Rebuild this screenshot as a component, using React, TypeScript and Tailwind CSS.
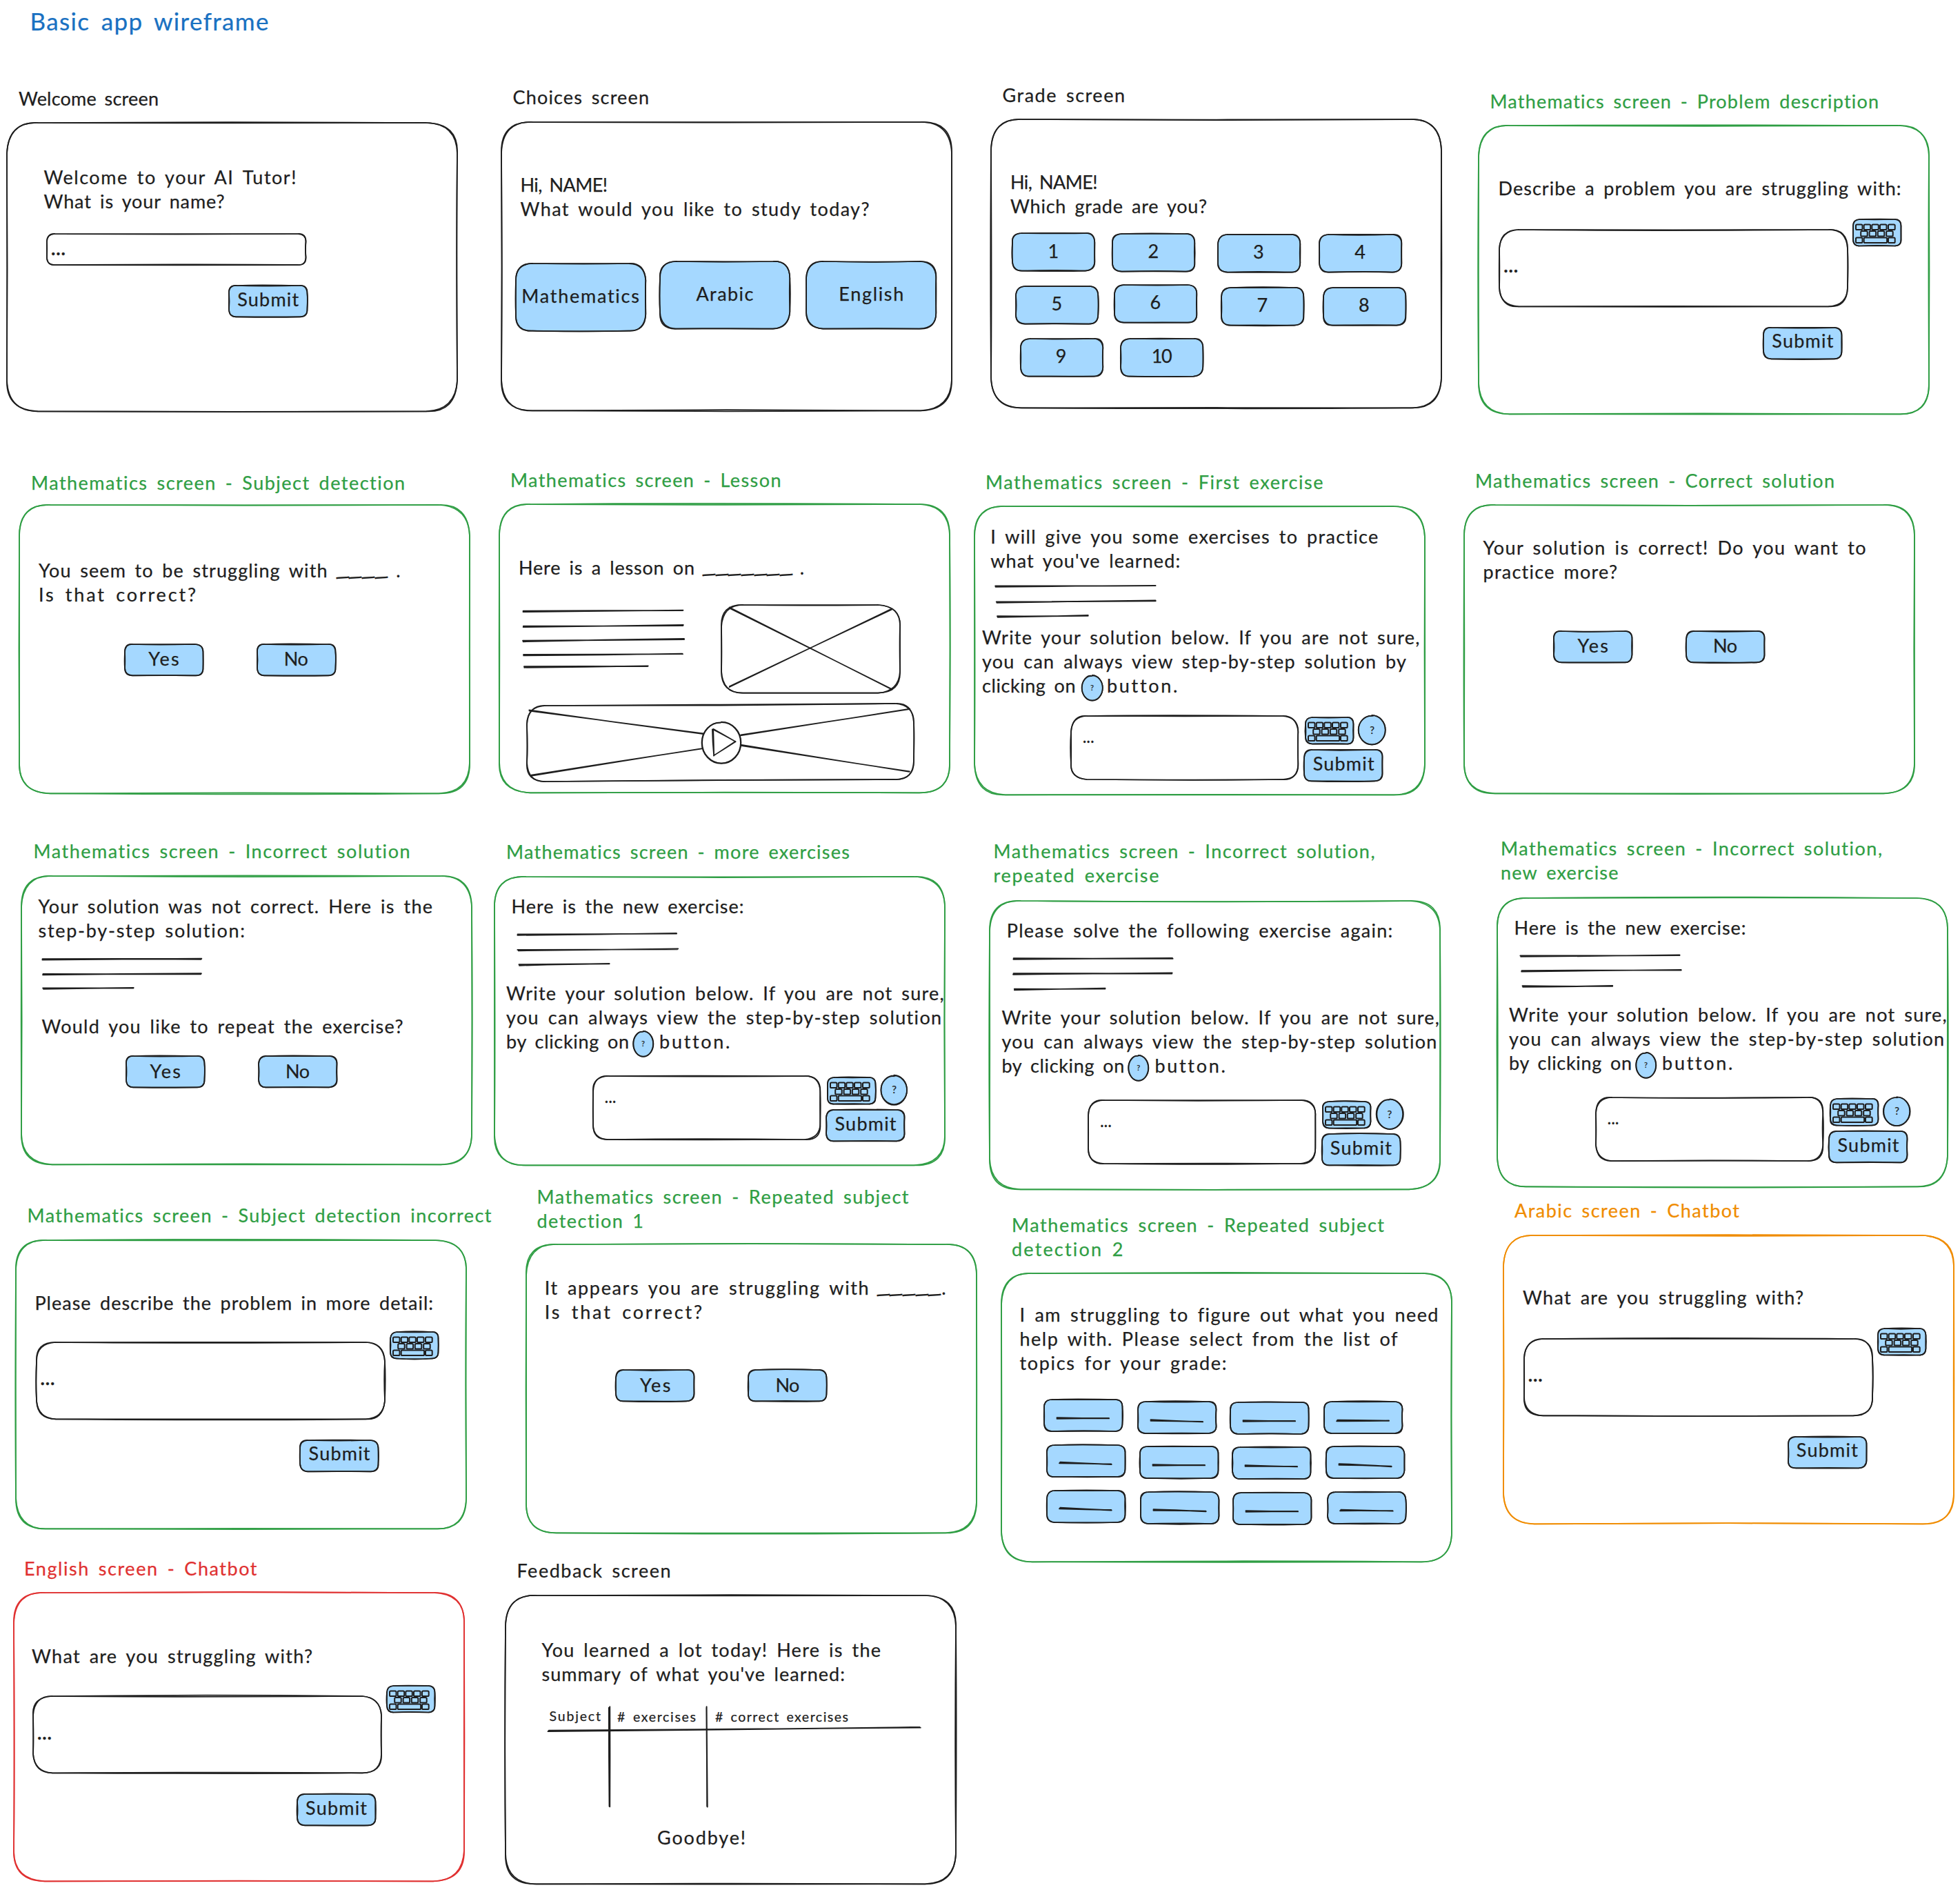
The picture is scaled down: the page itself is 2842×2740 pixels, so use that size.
import React, { useLayoutEffect, useRef } from "react";

const INK = "#1e1e1e";
const GREEN = "#2f9e44";
const FILL = "#a5d8ff";

type Pt = [number, number];

function makeRandom(seed: number) {
  let s = (Math.floor(seed * 97) % 2147483646) + 1;
  for (let i = 0; i < 4; i++) s = (s * 16807) % 2147483647;
  return () => {
    s = (s * 16807) % 2147483647;
    return (s / 2147483647) * 2 - 1;
  };
}

const f = (n: number) => n.toFixed(2);

/** One pen stroke between two points, bowed a little to the side. */
function stroke(a: Pt, b: Pt, rnd: () => number, amp: number) {
  const len = Math.hypot(b[0] - a[0], b[1] - a[1]) || 1;
  const nx = -(b[1] - a[1]) / len;
  const ny = (b[0] - a[0]) / len;
  const k1 = rnd() * amp;
  const k2 = k1 * 0.7 + rnd() * amp * 0.3;
  const c1: Pt = [a[0] + (b[0] - a[0]) * 0.35 + nx * k1, a[1] + (b[1] - a[1]) * 0.35 + ny * k1];
  const c2: Pt = [a[0] + (b[0] - a[0]) * 0.65 + nx * k2, a[1] + (b[1] - a[1]) * 0.65 + ny * k2];
  return `C${f(c1[0])} ${f(c1[1])} ${f(c2[0])} ${f(c2[1])} ${f(b[0])} ${f(b[1])}`;
}

function roundedPath(w: number, h: number, rnd: () => number, tilt = 0) {
  const r = Math.min(Math.min(w, h) * 0.25, 45);
  const amp = Math.min(2, 1.3 + Math.max(w, h) / 800);
  const j = () => rnd() * Math.min(2.4, r * 0.09);
  const t = -tilt;
  return [
    `M${f(r)} 0`,
    stroke([r, 0], [w - r, t], rnd, amp),
    `Q${f(w + j())} ${f(t + j())} ${f(w)} ${f(r + t)}`,
    stroke([w, r + t], [w, h - r + t], rnd, amp * 0.7),
    `Q${f(w + j())} ${f(h + t + j())} ${f(w - r)} ${f(h + t)}`,
    stroke([w - r, h + t], [r, h], rnd, amp),
    `Q${f(j())} ${f(h + j())} 0 ${f(h - r)}`,
    stroke([0, h - r], [0, r], rnd, amp * 0.7),
    `Q${f(j())} ${f(j())} ${f(r)} 0`,
  ].join("");
}

type BoxProps = {
  w: number;
  h: number;
  seed?: number;
  color?: string;
  fill?: string;
  tilt?: number;
  className?: string;
  children?: React.ReactNode;
};

function SketchBox({ w, h, seed = 1, color = INK, fill = "none", tilt = 0, className = "", children }: BoxProps) {
  const rnd = makeRandom(seed * 31 + w * 7 + h);
  const a = roundedPath(w, h, rnd, tilt);
  const b = roundedPath(w, h, rnd, tilt);
  return (
    <div className={`relative isolate flex shrink-0 ${className}`} style={{ width: w, height: h }}>
      <svg className="absolute inset-0 -z-10 h-full w-full overflow-visible" fill="none" stroke={color} strokeWidth={1.75} strokeLinecap="round">
        <path d={a} fill={fill} />
        <path d={b} />
      </svg>
      {children}
    </div>
  );
}

function SketchEllipse({ w, h, seed = 1, fill = FILL, className = "", children }: BoxProps) {
  const rnd = makeRandom(seed * 13 + w);
  const pass = () => {
    const rx = w / 2 + rnd() * 0.5;
    const ry = h / 2 + rnd() * 0.6;
    const cx = w / 2;
    const cy = h / 2;
    const k = 0.552;
    return `M${f(cx)} ${f(cy - ry)}C${f(cx + rx * k)} ${f(cy - ry)} ${f(cx + rx)} ${f(cy - ry * k)} ${f(cx + rx)} ${f(cy)}C${f(cx + rx)} ${f(cy + ry * k)} ${f(cx + rx * k)} ${f(cy + ry)} ${f(cx)} ${f(cy + ry)}C${f(cx - rx * k)} ${f(cy + ry)} ${f(cx - rx)} ${f(cy + ry * k)} ${f(cx - rx)} ${f(cy)}C${f(cx - rx)} ${f(cy - ry * k)} ${f(cx - rx * k)} ${f(cy - ry)} ${f(cx + rnd() * 2)} ${f(cy - ry + 0.8)}`;
  };
  return (
    <div className={`relative isolate flex shrink-0 items-center justify-center ${className}`} style={{ width: w, height: h }}>
      <svg className="absolute inset-0 -z-10 h-full w-full overflow-visible" fill="none" stroke={INK} strokeWidth={1.7} strokeLinecap="round">
        <path d={pass()} fill={fill} />
        <path d={pass()} />
      </svg>
      {children}
    </div>
  );
}

/** Loose pen lines; each entry is x1, y1, x2, y2 inside the drawing. */
function Pen({ lines, spread = 0.7, width = 1.9, className = "" }: { lines: number[][]; spread?: number; width?: number; className?: string }) {
  return (
    <svg className={`overflow-visible ${className}`} fill="none" stroke={INK} strokeWidth={width} strokeLinecap="round">
      {lines.map(([x1, y1, x2, y2], i) => {
        const rnd = makeRandom(x1 + y1 * 3 + x2 + 11);
        const pass = (s: number) => {
          const a: Pt = [x1 + rnd() * 0.8, y1 + s * spread];
          const b: Pt = [x2 + rnd() * 0.8, y2 - s * spread * (0.4 + rnd() * 0.6)];
          return `M${f(a[0])} ${f(a[1])}${stroke(a, b, rnd, 0.6)}`;
        };
        return <path key={i} d={pass(1) + pass(-1)} />;
      })}
    </svg>
  );
}

/** A line of text tracked out to a given width. */
function Line({ w, text, className = "text-[27px] leading-[35px]" }: { w: number; text: string; className?: string }) {
  const ref = useRef<HTMLSpanElement>(null);
  useLayoutEffect(() => {
    const el = ref.current;
    if (!el) return;
    el.style.letterSpacing = "0px";
    const natural = el.getBoundingClientRect().width;
    el.style.letterSpacing = `${(w + 2 - natural) / Math.max(1, text.length - 1)}px`;
  }, [w, text]);
  return (
    <p className={`shrink-0 whitespace-pre ${className}`} style={{ width: w }}>
      <span ref={ref} className="-ml-px inline-block [word-spacing:0.17em]">
        {text}
      </span>
    </p>
  );
}

function Lines({ rows }: { rows: [string, number][] }) {
  return (
    <div className="flex flex-col">
      {rows.map(([text, w]) => (
        <Line key={text} text={text} w={w} />
      ))}
    </div>
  );
}

function Blank({ n, className = "" }: { n: number; className?: string }) {
  return (
    <p className={`flex shrink-0 -translate-y-[5px] font-['Liberation_Sans',sans-serif] text-[32px] leading-[35px] ${className}`}>
      {Array.from({ length: n }, (_, i) => (
        <span key={i} className="inline-block w-[18.7px] -rotate-4">
          _
        </span>
      ))}
    </p>
  );
}

type ScreenProps = {
  place: string;
  title: [string, number][];
  titleClass: string;
  color?: string;
  seed: number;
  className: string;
  children: React.ReactNode;
};

/** One wireframe pinned on the canvas: its caption and its outlined panel. */
function Screen({ place, title, titleClass, color = INK, seed, className, children }: ScreenProps) {
  return (
    <section className={`absolute flex w-[653px] flex-col ${place}`}>
      <header className={titleClass}>
        <Lines rows={title} />
      </header>
      <SketchBox w={653} h={418.3} seed={seed} color={color} className={`flex-col ${className}`}>
        {children}
      </SketchBox>
    </section>
  );
}

function Button({ w = 113.5, h = 45.3, label, tw, seed = 1, className = "pb-[4px]" }: { w?: number; h?: number; label: string; tw: number; seed?: number; className?: string }) {
  return (
    <SketchBox w={w} h={h} seed={seed} fill={FILL} className={`items-center justify-center ${className}`}>
      <Line w={tw} text={label} />
    </SketchBox>
  );
}

const Submit = ({ seed = 5, className = "" }: { seed?: number; className?: string }) => (
  <Button label="Submit" tw={87} seed={seed} className={`pb-[7px] ${className}`} />
);

const YesNo = ({ seed, className }: { seed: number; className: string }) => (
  <div className={`flex gap-[78.3px] ${className}`}>
    <Button label="Yes" tw={42.5} seed={seed} />
    <Button label="No" tw={33} seed={seed + 4} />
  </div>
);

const KEYS = [
  [4, 7.5, 9.5], [15.7, 7.5, 9.5], [27.3, 7.5, 9.5], [39, 7.5, 9.5], [51, 7.5, 9.7],
  [11.2, 17, 9.5], [23.6, 17, 9.5], [35.8, 17, 9.5], [48.2, 17, 9.5],
  [4, 26.4, 9.5], [15.7, 26.4, 33.4], [51, 26.4, 9.7],
];

function Keyboard({ seed = 2 }: { seed?: number }) {
  return (
    <SketchBox w={69.5} h={38.5} seed={seed} fill={FILL}>
      <svg className="h-full w-full" viewBox="0 0 69.5 38.5" fill={FILL} stroke={INK} strokeWidth={2}>
        {KEYS.map(([x, y, w], i) => (
          <rect key={i} x={x} y={y} width={w} height={7.6} rx={1.6} />
        ))}
      </svg>
    </SketchBox>
  );
}

function Prompt({ seed, className }: { seed: number; className: string }) {
  return (
    <div className={`flex flex-col ${className}`}>
      <div className="flex gap-2">
        <SketchBox w={505} h={111.3} seed={seed} className="mt-[15px] items-center pb-[7px] pl-[7px]">
          <Line w={19} text="..." className="text-[27px] leading-[35px] font-bold" />
        </SketchBox>
        <Keyboard seed={seed} />
      </div>
      <Submit seed={seed} className="mt-[30.7px] ml-[382.8px]" />
    </div>
  );
}

function Answer({ seed, className }: { seed: number; className: string }) {
  return (
    <div className={`flex gap-[9.4px] ${className}`}>
      <SketchBox w={329.3} h={92} seed={seed} className="mt-[1.5px] items-start pt-[18px] pl-[18.5px]">
        <Line w={14} text="..." className="text-[20px] leading-[26px] font-bold" />
      </SketchBox>
      <div className="flex flex-col">
        <div className="ml-[1.9px] flex h-[50.5px] items-start gap-[7.7px]">
          <div className="pt-[3.5px]">
            <Keyboard seed={seed} />
          </div>
          <SketchEllipse w={38.5} h={42.5} seed={seed}>
            <span className="text-[15px] leading-none">?</span>
          </SketchEllipse>
        </div>
        <Submit seed={seed} />
      </div>
    </div>
  );
}

type InstructionsProps = {
  second: [string, number];
  third: [string, number];
  before: string;
  after: string;
  className: string;
};

function Instructions({ second, third, before, after, className }: InstructionsProps) {
  return (
    <div className={`flex flex-col ${className}`}>
      <Lines rows={[["Write your solution below. If you are not sure,", 633], second]} />
      <div className="flex h-[35px] items-start">
        <Line text={third[0]} w={third[1]} />
        <SketchEllipse w={29.5} h={36.7} seed={third[1]} className={`mt-[2.5px] ${before}`}>
          <span className="pb-0.5 text-[11px] leading-none">?</span>
        </SketchEllipse>
        <div className={after}>
          <Line text="button." w={99.5} />
        </div>
      </div>
    </div>
  );
}

const SCRIBBLE = "h-12 w-60 shrink-0";

type ExerciseProps = { place: string; title: [string, number][]; titleClass: string; seed: number; intro: [string, number]; lines: number[][] };

function ExerciseScreen({ place, title, titleClass, seed, intro, lines }: ExerciseProps) {
  return (
    <Screen place={place} title={title} titleClass={titleClass} color={GREEN} seed={seed} className="pt-[25px]">
      <div className="pl-[25.5px] text-[#1e1e1e]">
        <Line text={intro[0]} w={intro[1]} />
      </div>
      <Pen className={`mt-[22.2px] ml-[33.7px] ${SCRIBBLE}`} lines={lines} />
      <Instructions
        className="mt-[21.1px] ml-[18.1px]"
        second={["you can always view the step-by-step solution", 629.5]}
        third={["by clicking on", 176]}
        before="ml-[6.7px]"
        after="ml-[9.8px]"
      />
      <Answer seed={seed} className="mt-[31.5px] ml-[142.6px]" />
    </Screen>
  );
}

const digit = (n: string, seed: number, className: string) => (
  <div key={n} className={className}>
    <Button w={119.3} h={54.6} label={n} tw={n.length > 1 ? 28 : 15} seed={seed} className="pb-[5px]" />
  </div>
);

const topic = (seed: number, className: string, a: number, b: number) => (
  <div className={className}>
    <SketchBox w={113.5} h={46} seed={seed} fill={FILL}>
      <Pen className="h-full w-full" spread={0.7} lines={[[18.5, a, 94, b]]} />
    </SketchBox>
  </div>
);

const captionGreen = "text-[#2f9e44]";

export default function App() {
  return (
    <main className="relative h-[2740px] w-[2842px] overflow-hidden bg-white font-[Lato,sans-serif] text-[#1e1e1e] [-webkit-text-stroke:0.25px]">
      <h1 className="pt-[7px] pl-[44.5px] text-[#1971c2]">
        <Line w={344} text="Basic app wireframe" className="text-[35px] leading-[46px]" />
      </h1>

      <Screen place="left-[10px] top-[125px]" title={[["Welcome screen", 201]]} titleClass="ml-[18px] mb-[18px]" seed={1} className="pt-[60.7px]">
        <div className="pl-[54.5px]">
          <Lines rows={[["Welcome to your AI Tutor!", 364], ["What is your name?", 260]]} />
        </div>
        <SketchBox w={375.5} h={45} seed={3} className="mt-[30.3px] ml-[58px] items-center pb-[4px] pl-[7px]">
          <Line w={19} text="..." className="text-[27px] leading-[35px] font-bold" />
        </SketchBox>
        <Submit seed={6} className="mt-[30px] ml-[322px]" />
      </Screen>

      <Screen place="left-[727px] top-[123px]" title={[["Choices screen", 195.5]]} titleClass="ml-[17.5px] mb-[18.7px]" seed={2} className="pt-[73px]">
        <div className="pl-[28.5px]">
          <Lines rows={[["Hi, NAME!", 124.5], ["What would you like to study today?", 504]]} />
        </div>
        <div className="mt-[59px] ml-[20.7px] flex items-start">
          <div className="mt-[3px]">
            <Button w={188.3} h={97.7} label="Mathematics" tw={169} seed={3} className="pb-[4px]" />
          </div>
          <div className="ml-[20.8px]">
            <Button w={188.3} h={97.7} label="Arabic" tw={81} seed={8} className="pb-[5px]" />
          </div>
          <div className="mt-[0.4px] ml-[24.1px]">
            <Button w={188.3} h={97.7} label="English" tw={92} seed={11} className="pb-[5px]" />
          </div>
        </div>
      </Screen>

      <Screen place="left-[1437.2px] top-[120px]" title={[["Grade screen", 175.5]]} titleClass="ml-[17.3px] mb-[18.3px]" seed={3} className="pt-[73.2px]">
        <div className="pl-[28.8px]">
          <Lines rows={[["Hi, NAME!", 124.5], ["Which grade are you?", 283]]} />
        </div>
        <div className="mt-[21.9px] ml-[31.2px] flex h-[55.9px] items-start">
          {digit("1", 1, "")}
          {digit("2", 2, "ml-[25.6px] mt-[0.6px]")}
          {digit("3", 3, "ml-[33.4px] mt-[1.3px]")}
          {digit("4", 4, "ml-[27.9px] mt-[1.3px]")}
        </div>
        <div className="mt-[18.3px] ml-[36.2px] flex h-[58.6px] items-start">
          {digit("5", 5, "mt-[2.4px]")}
          {digit("6", 6, "ml-[23.8px]")}
          {digit("7", 7, "ml-[35.6px] mt-1")}
          {digit("8", 8, "ml-[28.3px] mt-1")}
        </div>
        <div className="mt-5 ml-[42.5px] flex gap-[26px]">
          {digit("9", 9, "")}
          {digit("10", 10, "")}
        </div>
      </Screen>

      <Screen
        place="left-[2144px] top-[129.3px]"
        title={[["Mathematics screen - Problem description", 562.5]]}
        titleClass={`ml-[17.5px] mb-[18.1px] ${captionGreen}`}
        color={GREEN}
        seed={4}
        className="pt-[73px]"
      >
        <div className="pl-[29.5px]">
          <Line w={582} text="Describe a problem you are struggling with:" />
        </div>
        <Prompt seed={4} className="mt-[27.3px] ml-[30.3px]" />
      </Screen>

      <Screen
        place="left-[28px] top-[681.5px]"
        title={[["Mathematics screen - Subject detection", 541]]}
        titleClass={`ml-[18px] mb-[15.3px] ${captionGreen}`}
        color={GREEN}
        seed={5}
        className="pt-[77.2px]"
      >
        <div className="flex flex-col pl-[29px]">
          <div className="flex h-[35px]">
            <Line w={416.5} text="You seem to be struggling with" />
            <Blank n={4} className="ml-[13px]" />
            <div className="ml-[14px]">
              <Line w={4} text="." />
            </div>
          </div>
          <Line w={226} text="Is that correct?" />
        </div>
        <YesNo seed={2} className="mt-[55.2px] ml-[152.8px]" />
      </Screen>

      <Screen
        place="left-[723.7px] top-[678px]"
        title={[["Mathematics screen - Lesson", 391]]}
        titleClass={`ml-[17.3px] mb-[17.8px] ${captionGreen}`}
        color={GREEN}
        seed={6}
        className="pt-[74.6px]"
      >
        <div className="flex h-[35px] pl-[29.3px]">
          <Line w={253} text="Here is a lesson on" />
          <Blank n={7} className="ml-[12px]" />
          <div className="ml-[12px]">
            <Line w={4} text="." />
          </div>
        </div>
        <div className="mt-[36.3px] ml-[34.3px] flex items-start gap-[48.4px]">
          <Pen
            className="mt-[7.1px] h-[86px] w-60 shrink-0"
            lines={[[0, 2.3, 232, 1], [1, 24.4, 232.5, 22.4], [0.5, 45.5, 233.5, 42.7], [0.5, 65.7, 232, 64], [2, 83, 181.5, 82]]}
          />
          <SketchBox w={259} h={127.6} seed={9}>
            <Pen className="h-full w-full" spread={0.6} width={1.7} lines={[[11, 4, 247.3, 122.6], [11.6, 118.5, 246.6, 6.5]]} />
          </SketchBox>
        </div>
        <SketchBox w={561} h={110} tilt={3} seed={4} className="mt-[18.5px] ml-[40.3px] items-center justify-center">
          <Pen
            className="absolute inset-0 h-full w-full"
            spread={0.6}
            width={1.7}
            lines={[[4, 7, 256.5, 40.9], [6.5, 101.2, 255, 62.3], [310, 42.9, 554.8, 5], [311, 57.5, 555, 95.5]]}
          />
          <SketchEllipse w={56} h={59.5} fill="#ffffff" seed={3} className="mb-[3px] ml-[3px]">
            <Pen className="h-full w-full" spread={0.4} width={1.6} lines={[[15.5, 10.2, 48.5, 28], [48.5, 28, 16.8, 48.2], [16.8, 48.2, 15.5, 10.2]]} />
          </SketchEllipse>
        </SketchBox>
      </Screen>

      <Screen
        place="left-[1412.7px] top-[681.2px]"
        title={[["Mathematics screen - First exercise", 488]]}
        titleClass={`ml-[17.3px] mb-[17.7px] ${captionGreen}`}
        color={GREEN}
        seed={7}
        className="pt-[25.9px]"
      >
        <div className="pl-[24.5px]">
          <Lines rows={[["I will give you some exercises to practice", 560.5], ["what you've learned:", 273]]} />
        </div>
        <Pen className={`mt-[18.2px] ml-[31.3px] ${SCRIBBLE}`} lines={[[0, 2.1, 231, 0.9], [1, 25.2, 232, 22.6], [2, 46, 134, 44.3]]} />
        <Instructions
          className="mt-[10.5px] ml-[12.3px]"
          second={["you can always view step-by-step solution by", 613.5]}
          third={["clicking on", 133.5]}
          before="ml-[10.3px]"
          after="ml-[7.7px]"
        />
        <Answer seed={7} className="mt-[25.4px] ml-[140px]" />
      </Screen>

      <Screen
        place="left-[2122.5px] top-[679px]"
        title={[["Mathematics screen - Correct solution", 520]]}
        titleClass={`ml-[17.5px] mb-[18px] ${captionGreen}`}
        color={GREEN}
        seed={8}
        className="pt-[44.3px]"
      >
        <div className="pl-[29px]">
          <Lines rows={[["Your solution is correct! Do you want to", 553.5], ["practice more?", 193]]} />
        </div>
        <YesNo seed={3} className="mt-[69px] ml-[130.5px]" />
      </Screen>

      <Screen
        place="left-[31.3px] top-[1216px]"
        title={[["Mathematics screen - Incorrect solution", 545]]}
        titleClass={`ml-[18.2px] mb-[19px] ${captionGreen}`}
        color={GREEN}
        seed={9}
        className="pt-[25.5px]"
      >
        <div className="pl-[25.2px]">
          <Lines rows={[["Your solution was not correct. Here is the", 570], ["step-by-step solution:", 298]]} />
        </div>
        <Pen className={`mt-[23.5px] ml-[30.5px] ${SCRIBBLE}`} lines={[[0, 1.9, 230, 1.3], [0, 23.6, 230, 22.8], [0.5, 44.2, 131, 43.2]]} />
        <div className="mt-[32.8px] pl-[30.2px]">
          <Line w={522} text="Would you like to repeat the exercise?" />
        </div>
        <YesNo seed={6} className="mt-[26.6px] ml-[151.7px]" />
      </Screen>

      <ExerciseScreen
        place="left-[717px] top-[1217px]"
        title={[["Mathematics screen - more exercises", 496.5]]}
        titleClass={`ml-[18px] mb-[18.9px] ${captionGreen}`}
        seed={10}
        intro={["Here is the new exercise:", 335]}
        lines={[[0, 2.1, 230.5, 0.4], [0, 24.6, 232, 22.8], [2, 46, 132, 44.3]]}
      />

      <ExerciseScreen
        place="left-[1435.3px] top-[1216px]"
        title={[["Mathematics screen - Incorrect solution,", 552], ["repeated exercise", 238]]}
        titleClass={`ml-[6.2px] mb-5 ${captionGreen}`}
        seed={11}
        intro={["Please solve the following exercise again:", 557.5]}
        lines={[[0, 2, 231, 1.5], [0, 24, 231, 23], [2, 46.5, 133, 45.2]]}
      />

      <ExerciseScreen
        place="left-[2171px] top-[1212px]"
        title={[["Mathematics screen - Incorrect solution,", 552], ["new exercise", 168.5]]}
        titleClass={`ml-[6px] mb-[19.9px] ${captionGreen}`}
        seed={12}
        intro={["Here is the new exercise:", 334]}
        lines={[[0, 2.2, 231, 0.7], [1, 23.8, 232.5, 22.2], [2.5, 46, 133.5, 45.3]]}
      />

      <Screen
        place="left-[22.5px] top-[1744.4px]"
        title={[["Mathematics screen - Subject detection incorrect", 672]]}
        titleClass={`ml-[18px] mb-[19px] ${captionGreen}`}
        color={GREEN}
        seed={13}
        className="pt-[73px]"
      >
        <div className="pl-[29px]">
          <Line w={575.5} text="Please describe the problem in more detail:" />
        </div>
        <Prompt seed={13} className="mt-[24.2px] ml-[30px]" />
      </Screen>

      <Screen
        place="left-[762.7px] top-[1717px]"
        title={[["Mathematics screen - Repeated subject", 537.5], ["detection 1", 153]]}
        titleClass={`ml-[16.8px] mb-[17px] ${captionGreen}`}
        color={GREEN}
        seed={14}
        className="pt-[45.3px]"
      >
        <div className="flex flex-col pl-[28px]">
          <div className="flex h-[35px]">
            <Line w={468} text="It appears you are struggling with" />
            <Blank n={5} className="ml-[12px]" />
            <div className="ml-[2px]">
              <Line w={4} text="." />
            </div>
          </div>
          <Line w={226.5} text="Is that correct?" />
        </div>
        <YesNo seed={7} className="mt-[67.2px] ml-[130.7px]" />
      </Screen>

      <Screen
        place="left-[1452px] top-[1758.2px]"
        title={[["Mathematics screen - Repeated subject", 538.5], ["detection 2", 160]]}
        titleClass={`ml-[16px] mb-[17.8px] ${captionGreen}`}
        color={GREEN}
        seed={15}
        className="pt-[42.5px]"
      >
        <div className="pl-[27.5px]">
          <Lines
            rows={[
              ["I am struggling to figure out what you need", 604.5],
              ["help with. Please select from the list of", 546],
              ["topics for your grade:", 298],
            ]}
          />
        </div>
        <div className="mt-9 ml-[62px] flex h-[50px] items-start">
          {topic(1, "", 27, 27)}
          {topic(2, "ml-[22.5px] mt-[2.5px]", 27, 29)}
          {topic(3, "ml-[20px] mt-1", 27, 27)}
          {topic(4, "ml-[22.5px] mt-[2.5px]", 27.5, 27.5)}
        </div>
        <div className="mt-[15.5px] ml-[65.5px] flex h-[49.5px] items-start">
          {topic(5, "", 25.5, 28)}
          {topic(6, "ml-[22px] mt-[2px]", 27, 27)}
          {topic(7, "ml-[20.5px] mt-[3.5px]", 27, 28)}
          {topic(8, "ml-[22.5px] mt-[2px]", 26, 29)}
        </div>
        <div className="mt-[16.5px] ml-[66px] flex items-start">
          {topic(9, "", 25.5, 28.5)}
          {topic(10, "ml-[22.5px] mt-[2.5px]", 26, 28)}
          {topic(11, "ml-[20.5px] mt-[3.5px]", 27, 27)}
          {topic(12, "ml-[23.5px] mt-[2.5px]", 26.5, 27.5)}
        </div>
      </Screen>

      <Screen
        place="left-[2180px] top-[1736.7px]"
        title={[["Arabic screen - Chatbot", 324]]}
        titleClass="ml-[17px] mb-[19.3px] text-[#f08c00]"
        color="#f08c00"
        seed={16}
        className="pt-[72.5px]"
      >
        <div className="pl-[29px]">
          <Line w={405} text="What are you struggling with?" />
        </div>
        <Prompt seed={16} className="mt-[27.2px] ml-[29.8px]" />
      </Screen>

      <Screen
        place="left-[19.5px] top-[2256px]"
        title={[["English screen - Chatbot", 335.5]]}
        titleClass="ml-[16.5px] mb-[18px] text-[#e03131]"
        color="#e03131"
        seed={17}
        className="pt-[73.7px]"
      >
        <div className="pl-[27.5px]">
          <Line w={405} text="What are you struggling with?" />
        </div>
        <Prompt seed={17} className="mt-[26.5px] ml-[28.5px]" />
      </Screen>

      <Screen place="left-[733px] top-[2258.5px]" title={[["Feedback screen", 221]]} titleClass="ml-[17.5px] mb-[19px]" seed={18} className="pt-[61.2px]">
        <div className="pl-[53.5px]">
          <Lines rows={[["You learned a lot today! Here is the", 489.5], ["summary of what you've learned:", 437.5]]} />
        </div>
        <div className="relative mt-[31.3px] ml-[62px] flex h-[145px] w-[540px] items-start pl-[2.5px]">
          <Pen className="absolute inset-0 h-full w-full" lines={[[0, 34.3, 539, 29.2], [88.5, 0, 89.3, 144], [229.5, 0, 230.3, 144]]} />
          <Line w={72.5} text="Subject" className="text-[19.5px] leading-[25px]" />
          <div className="ml-[26px]">
            <Line w={112} text="# exercises" className="text-[19.5px] leading-[27px]" />
          </div>
          <div className="ml-[30px]">
            <Line w={191} text="# correct exercises" className="text-[19.5px] leading-[27px]" />
          </div>
        </div>
        <div className="mt-[26.3px] pl-[221px]">
          <Line w={126} text="Goodbye!" />
        </div>
      </Screen>
    </main>
  );
}
